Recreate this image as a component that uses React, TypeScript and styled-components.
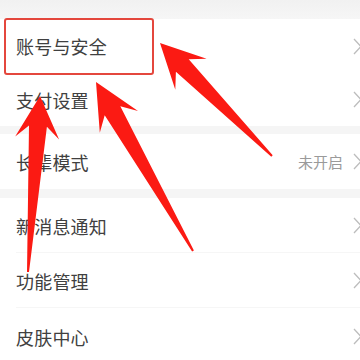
import React from "react";
import styled, { createGlobalStyle } from "styled-components";

const Global = createGlobalStyle`
  html, body { margin: 0; padding: 0; background: #f5f5f5; }
  body { font-family: "Noto Sans CJK SC", "Noto Sans", sans-serif; }
`;

const Page = styled.div`
  position: relative;
  width: 360px;
  height: 360px;
  overflow: hidden;
  background: #f5f5f5;
  display: flex;
  flex-direction: column;
`;

const TopBand = styled.div`
  height: 19px;
  flex: none;
  background: linear-gradient(#f1f1f1, #f6f6f6);
`;

const Section = styled.div<{ $gap?: number }>`
  background: #ffffff;
  margin-bottom: ${(p) => p.$gap ?? 0}px;
  flex: none;
  display: flex;
  flex-direction: column;
`;

const Row = styled.div<{ $h: number; $divider?: boolean }>`
  height: ${(p) => p.$h}px;
  display: flex;
  align-items: center;
  padding-left: 16px;
  position: relative;
  box-sizing: border-box;
  ${(p) =>
    p.$divider
      ? `&::after { content: ""; position: absolute; left: 16px; right: 0; bottom: 0; height: 1px; background: #f6f6f6; }`
      : ""}
`;

const Label = styled.span`
  flex: 1;
  font-size: 18px;
  color: #404040;
  letter-spacing: 0.2px;
`;

const Value = styled.span`
  font-size: 15px;
  color: #9a9a9a;
  margin-right: 10px;
`;

const ChevronWrap = styled.span`
  display: flex;
  margin-right: -2px;
`;

const Highlight = styled.div`
  position: absolute;
  left: 4px;
  top: 18px;
  width: 150px;
  height: 57px;
  box-sizing: border-box;
  border: 2.5px solid #e4473d;
  border-radius: 3px;
  pointer-events: none;
`;

const Overlay = styled.svg`
  position: absolute;
  left: 0;
  top: 0;
  pointer-events: none;
`;

const Chevron = () => (
  <ChevronWrap>
    <svg width="9" height="17" viewBox="0 0 9 17">
      <polyline points="1,1 8,8.5 1,16" fill="none" stroke="#bdbdbd" strokeWidth="1.3" />
    </svg>
  </ChevronWrap>
);

type Pt = [number, number];

function arrowPoints(tip: Pt, tail: Pt, headLen: number, headHalf: number, shaftHalf: number, tailHalf: number): string {
  const dx = tail[0] - tip[0];
  const dy = tail[1] - tip[1];
  const len = Math.hypot(dx, dy);
  const ux = dx / len;
  const uy = dy / len;
  const px = -uy;
  const py = ux;
  const at = (d: number, w: number): Pt => [tip[0] + ux * d + px * w, tip[1] + uy * d + py * w];
  const pts: Pt[] = [
    tip,
    at(headLen, headHalf),
    at(headLen * 0.72, shaftHalf),
    at(len, tailHalf),
    at(len, -tailHalf),
    at(headLen * 0.72, -shaftHalf),
    at(headLen, -headHalf),
  ];
  return pts.map((p) => `${p[0].toFixed(1)},${p[1].toFixed(1)}`).join(" ");
}

const arrows = [
  arrowPoints([160, 43], [272, 156], 44, 22, 9, 1),
  arrowPoints([96, 82], [193, 251], 46, 22, 9, 1),
  arrowPoints([40, 96], [28, 272], 42, 22, 9, 1),
];

export default function App() {
  return (
    <>
      <Global />
      <Page>
        <TopBand />
        <Section $gap={8}>
          <Row $h={54}>
            <Label>账号与安全</Label>
            <Chevron />
          </Row>
          <Row $h={53}>
            <Label>支付设置</Label>
            <Chevron />
          </Row>
        </Section>
        <Section $gap={9}>
          <Row $h={55}>
            <Label>长辈模式</Label>
            <Value>未开启</Value>
            <Chevron />
          </Row>
        </Section>
        <Section>
          <Row $h={55} $divider>
            <Label>新消息通知</Label>
            <Chevron />
          </Row>
          <Row $h={55} $divider>
            <Label>功能管理</Label>
            <Chevron />
          </Row>
          <Row $h={57}>
            <Label>皮肤中心</Label>
            <Chevron />
          </Row>
        </Section>
        <Highlight />
        <Overlay width="360" height="360" viewBox="0 0 360 360">
          {arrows.map((p, i) => (
            <polygon key={i} points={p} fill="#fb1a13" />
          ))}
        </Overlay>
      </Page>
    </>
  );
}
